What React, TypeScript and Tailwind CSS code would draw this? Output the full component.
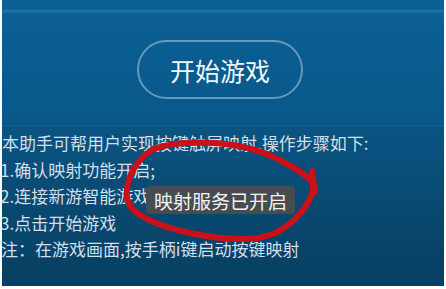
export default function App() {
  const font = { fontFamily: '"Noto Sans CJK SC", "Noto Sans", sans-serif' };
  return (
    <div className="w-[446px] h-[289px] bg-white pl-[2px] pr-[2px] pb-[3px] overflow-hidden" style={font}>
      <div className="relative w-full h-full flex flex-col">
        {/* top section */}
        <div className="h-[124px] flex flex-col bg-gradient-to-b from-[#0b6195] to-[#09578a]">
          <div className="h-[10px]" />
          <div className="h-[1px] bg-[#2a76a4]" />
          <div className="h-[2px] bg-[#1a6a9b]" />
          <div className="pl-[135px] pt-[27px]">
            <div className="w-[166px] h-[59px] rounded-full border-2 border-[#6799b8] flex items-center justify-center pt-[2px]">
              <span className="text-[25px] leading-none text-[#f2f6f9]">开始游戏</span>
            </div>
          </div>
        </div>
        <div className="h-[1px] bg-[#08507d]" />
        <div className="h-[1px] bg-[#1b6592]" />
        {/* bottom section */}
        <div className="flex-1 bg-gradient-to-b from-[#0a5482] to-[#073f61] pt-[4px] text-[17px] leading-[26.5px] text-[#d3dfe9]">
          <div className="whitespace-nowrap">本助手可帮用户实现按键触屏映射,操作步骤如下:</div>
          <div className="whitespace-nowrap -ml-[2px]">1.确认映射功能开启;</div>
          <div className="whitespace-nowrap -ml-[2px]">2.连接新游智能游戏手柄</div>
          <div className="whitespace-nowrap -ml-[2px]">3.点击开始游戏</div>
          <div className="whitespace-nowrap -ml-[1px]">注：在游戏画面,按手柄i键启动按键映射</div>
        </div>
        {/* red hand-drawn circle */}
        <svg className="absolute left-[-2px] top-0" width="446" height="289" viewBox="0 0 446 289">
          <path
            d="M127 190 C128 175 138 158 152 150 C168 143 195 142 215 143 C240 145 265 151 285 163 C300 171 310 177 313 184 C314 195 306 208 296 218 C285 229 272 236 258 238 C240 240 215 238 195 234 C175 230 155 224 142 216 C131 210 125 202 127 190 Z"
            fill="none"
            stroke="#cc1019"
            strokeWidth="6"
            strokeLinejoin="round"
          />
          <path d="M312 171 L315 192" stroke="#cc1019" strokeWidth="6" strokeLinecap="round" />
        </svg>
        {/* toast */}
        <div className="absolute left-[144px] top-[186px] w-[149px] h-[28px] rounded-[3px] bg-[#474c51] flex items-center justify-center">
          <span className="text-[19px] leading-none text-[#f4f4f4] whitespace-nowrap">映射服务已开启</span>
        </div>
      </div>
    </div>
  );
}
